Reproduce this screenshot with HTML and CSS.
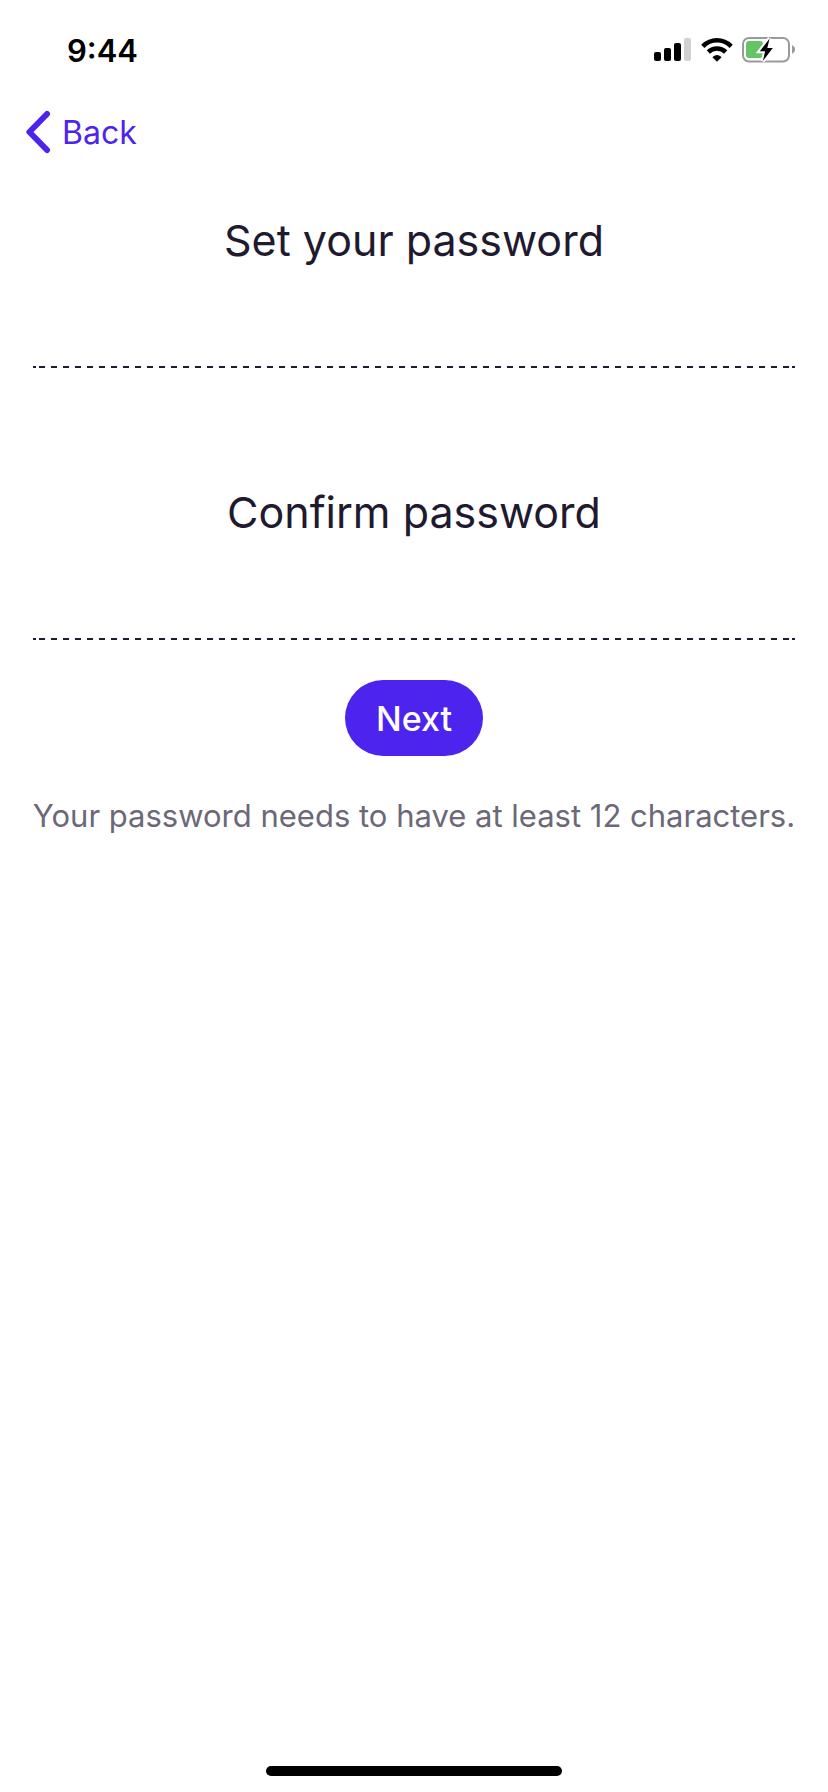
FILE: index.html
```html
<!DOCTYPE html>
<html lang="en">
<head>
  <meta charset="UTF-8">
  <meta name="viewport" content="width=device-width, initial-scale=1.0">
  <title>Set your password</title>
  <link rel="stylesheet" href="styles.css">
</head>
<body>
  <div class="screen">
    <!-- Status bar -->
    <header class="status-bar">
      <span class="time">9:44</span>
      <div class="status-icons">
        <svg width="38" height="24" viewBox="0 0 38 24" aria-hidden="true">
          <rect x="0" y="14" width="7" height="9" rx="2"/>
          <rect x="10" y="10" width="7" height="13" rx="2"/>
          <rect x="20" y="5" width="7" height="18" rx="2"/>
          <rect x="30" y="0" width="7" height="23" rx="2" fill="#d1d1d3"/>
        </svg>
        <svg width="32" height="24" viewBox="0 0 32 24" aria-hidden="true">
          <g fill="none" stroke="#000" stroke-width="4.6">
            <path d="M1.8 8.3C10 .3 22 .3 30.2 8.3"/>
            <path d="M7.3 14C12.3 9.4 19.7 9.4 24.7 14"/>
          </g>
          <path d="M16 23.3l-4.1-4.1q4.1-3.2 8.2 0z" stroke="#000" stroke-linejoin="round"/>
        </svg>
        <svg width="54" height="26" viewBox="0 0 54 26" aria-hidden="true">
          <rect x="1" y="1" width="46" height="23.5" rx="6" fill="none" stroke="#99989e" stroke-width="2"/>
          <path d="M50 8.3q3 1.3 3 4.2t-3 4.2z" fill="#99989e"/>
          <rect x="4" y="4" width="17" height="17" rx="3" fill="#65c466"/>
          <path d="M27.6 1.5L17.8 14.3h5.3L20.9 24 30.8 11h-5.5z" stroke="#fff" stroke-width="4" paint-order="stroke"/>
        </svg>
      </div>
    </header>

    <nav class="nav">
      <a class="back" href="#">
        <svg width="26" height="44" viewBox="0 0 26 44" aria-hidden="true">
          <path d="M22 4L4.4 22 22 40" fill="none" stroke="#4d24ee" stroke-width="6" stroke-linecap="round" stroke-linejoin="round"/>
        </svg>
        Back
      </a>
    </nav>

    <form class="password-form">
      <div class="field">
        <label for="password">Set your password</label>
        <input type="password" id="password">
      </div>
      <div class="field">
        <label for="confirm-password">Confirm password</label>
        <input type="password" id="confirm-password">
      </div>
      <button type="submit">Next</button>
      <p class="hint">Your password needs to have at least 12 characters.</p>
    </form>

    <div class="home-indicator"></div>
  </div>
</body>
</html>
```
FILE: styles.css
```css
* {
  box-sizing: border-box;
}
body {
  font-family: Inter, "Liberation Sans", sans-serif;
  background-color: #fff;
  color: #1f1a30;
  margin: 0;
}
.screen {
  display: flex;
  flex-direction: column;
  min-height: 100vh;
}
.status-bar {
  display: flex;
  justify-content: space-between;
  align-items: center;
  height: 100px;
  padding: 0 32px 0 67px;
  color: #000;
}
.time {
  font-size: 31px;
  font-weight: 600;
}
.status-icons {
  display: flex;
  align-items: center;
  gap: 9px;
}
.nav {
  padding: 0 25px;
}
.back {
  display: inline-flex;
  align-items: center;
  gap: 11px;
  height: 64px;
  color: #4d24ee;
  font-size: 32px;
  text-decoration: none;
}
.password-form {
  display: flex;
  flex-direction: column;
  align-items: center;
  padding: 44px 32px 0;
}
.field {
  width: 100%;
  text-align: center;
}
.field + .field {
  margin-top: 112px;
}
.field label {
  display: block;
  font-size: 43px;
  line-height: 64px;
}
.field input {
  display: block;
  width: 100%;
  height: 96px;
  padding: 0 7px;
  border: none;
  outline: none;
  font-size: 43px;
  text-align: center;
  background-color: transparent;
  /* dashed underline with a short dash at each end */
  background-image:
    linear-gradient(#1f1a30, #1f1a30),
    linear-gradient(#1f1a30, #1f1a30),
    linear-gradient(to right, #1f1a30 6px, transparent 6px);
  background-size: 3px 2px, 3px 2px, 12px 2px;
  background-position: 1px 100%, right 1px bottom, left bottom;
  background-repeat: no-repeat, no-repeat, repeat-x;
  background-origin: border-box, border-box, content-box;
  background-clip: border-box, border-box, content-box;
}
button {
  height: 76px;
  margin-top: 40px;
  padding: 0 31px;
  border: none;
  border-radius: 38px;
  background-color: #4d24ee;
  color: #fff;
  font-family: inherit;
  font-size: 34px;
  font-weight: 500;
  cursor: pointer;
}
.hint {
  margin: 40px 0 0;
  color: #6c6878;
  font-size: 31px;
  line-height: 40px;
  text-align: center;
}
.home-indicator {
  width: 296px;
  height: 10px;
  margin: auto auto 16px;
  border-radius: 5px;
  background-color: #000;
}
```
